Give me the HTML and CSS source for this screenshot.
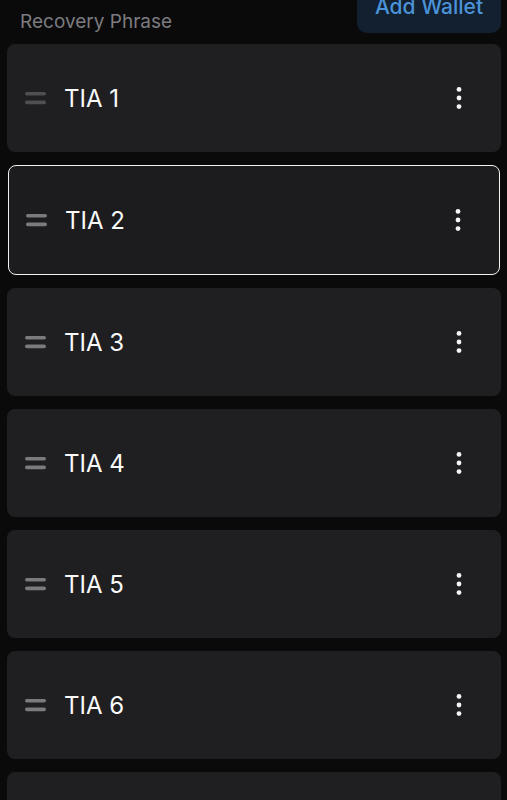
FILE: index.html
```html
<!DOCTYPE html>
<html lang="en">
<head>
    <meta charset="UTF-8">
    <meta name="viewport" content="width=device-width, initial-scale=1.0">
    <title>Wallets</title>
    <link rel="stylesheet" href="styles.css">
</head>
<body>
    <div class="screen">
        <div class="header">
            <span class="section-label">Recovery Phrase</span>
            <button class="add-btn">Add Wallet</button>
        </div>

        <div class="wallet-list">
            <div class="wallet-row faded">
                <svg class="handle" width="21" height="13" viewBox="0 0 21 13"><rect x="0" y="0" width="21" height="3.6" rx="1.8"/><rect x="0" y="8.6" width="21" height="3.6" rx="1.8"/></svg>
                <span class="wallet-name">TIA 1</span>
                <svg class="more" width="6" height="24" viewBox="0 0 6 24"><circle cx="3" cy="3.4" r="2.4"/><circle cx="3" cy="12" r="2.4"/><circle cx="3" cy="20.6" r="2.4"/></svg>
            </div>
            <div class="wallet-row selected">
                <svg class="handle" width="21" height="13" viewBox="0 0 21 13"><rect x="0" y="0" width="21" height="3.6" rx="1.8"/><rect x="0" y="8.6" width="21" height="3.6" rx="1.8"/></svg>
                <span class="wallet-name">TIA 2</span>
                <svg class="more" width="6" height="24" viewBox="0 0 6 24"><circle cx="3" cy="3.4" r="2.4"/><circle cx="3" cy="12" r="2.4"/><circle cx="3" cy="20.6" r="2.4"/></svg>
            </div>
            <div class="wallet-row">
                <svg class="handle" width="21" height="13" viewBox="0 0 21 13"><rect x="0" y="0" width="21" height="3.6" rx="1.8"/><rect x="0" y="8.6" width="21" height="3.6" rx="1.8"/></svg>
                <span class="wallet-name">TIA 3</span>
                <svg class="more" width="6" height="24" viewBox="0 0 6 24"><circle cx="3" cy="3.4" r="2.4"/><circle cx="3" cy="12" r="2.4"/><circle cx="3" cy="20.6" r="2.4"/></svg>
            </div>
            <div class="wallet-row">
                <svg class="handle" width="21" height="13" viewBox="0 0 21 13"><rect x="0" y="0" width="21" height="3.6" rx="1.8"/><rect x="0" y="8.6" width="21" height="3.6" rx="1.8"/></svg>
                <span class="wallet-name">TIA 4</span>
                <svg class="more" width="6" height="24" viewBox="0 0 6 24"><circle cx="3" cy="3.4" r="2.4"/><circle cx="3" cy="12" r="2.4"/><circle cx="3" cy="20.6" r="2.4"/></svg>
            </div>
            <div class="wallet-row">
                <svg class="handle" width="21" height="13" viewBox="0 0 21 13"><rect x="0" y="0" width="21" height="3.6" rx="1.8"/><rect x="0" y="8.6" width="21" height="3.6" rx="1.8"/></svg>
                <span class="wallet-name">TIA 5</span>
                <svg class="more" width="6" height="24" viewBox="0 0 6 24"><circle cx="3" cy="3.4" r="2.4"/><circle cx="3" cy="12" r="2.4"/><circle cx="3" cy="20.6" r="2.4"/></svg>
            </div>
            <div class="wallet-row">
                <svg class="handle" width="21" height="13" viewBox="0 0 21 13"><rect x="0" y="0" width="21" height="3.6" rx="1.8"/><rect x="0" y="8.6" width="21" height="3.6" rx="1.8"/></svg>
                <span class="wallet-name">TIA 6</span>
                <svg class="more" width="6" height="24" viewBox="0 0 6 24"><circle cx="3" cy="3.4" r="2.4"/><circle cx="3" cy="12" r="2.4"/><circle cx="3" cy="20.6" r="2.4"/></svg>
            </div>
            <div class="wallet-row"></div>
        </div>
    </div>
</body>
</html>
```

FILE: styles.css
```css
html, body {
    margin: 0;
    padding: 0;
    background-color: #0a0a0b;
    height: 800px;
    overflow: hidden;
}
body {
    font-family: Inter, "Noto Sans", sans-serif;
    color: #fff;
}
.screen {
    margin-top: -17px;
    padding: 0 6px 0 7px;
}
.header {
    display: flex;
    justify-content: space-between;
    align-items: flex-end;
}
.section-label {
    font-size: 19px;
    line-height: 24px;
    color: #7c7c80;
    padding-left: 13px;
    margin-bottom: -1px;
}
.add-btn {
    height: 50px;
    width: 144px;
    border: none;
    border-radius: 10px;
    background-color: #122030;
    color: #4b93d8;
    font-family: inherit;
    font-size: 21px;
    font-weight: 500;
    padding: 0 0 4px;
}
.wallet-list {
    margin-top: 11px;
    display: flex;
    flex-direction: column;
    gap: 13px;
}
.wallet-row {
    height: 108px;
    box-sizing: border-box;
    display: flex;
    align-items: center;
    padding: 0 39px 0 18px;
    background-color: #1f1f22;
    border-radius: 8px;
}
.wallet-row.selected {
    height: 110px;
    margin: 0 1px;
    padding: 0 38px 0 17px;
    border: 1.5px solid #f2f2f2;
    background-color: #1c1c1f;
}
.handle {
    fill: #7b7b7e;
    flex-shrink: 0;
}
.faded .handle {
    fill: #4f4f53;
}
.wallet-name {
    margin-left: 18px;
    flex: 1;
    font-size: 24px;
    color: #fafafa;
}
.more {
    fill: #f5f5f5;
}
```
